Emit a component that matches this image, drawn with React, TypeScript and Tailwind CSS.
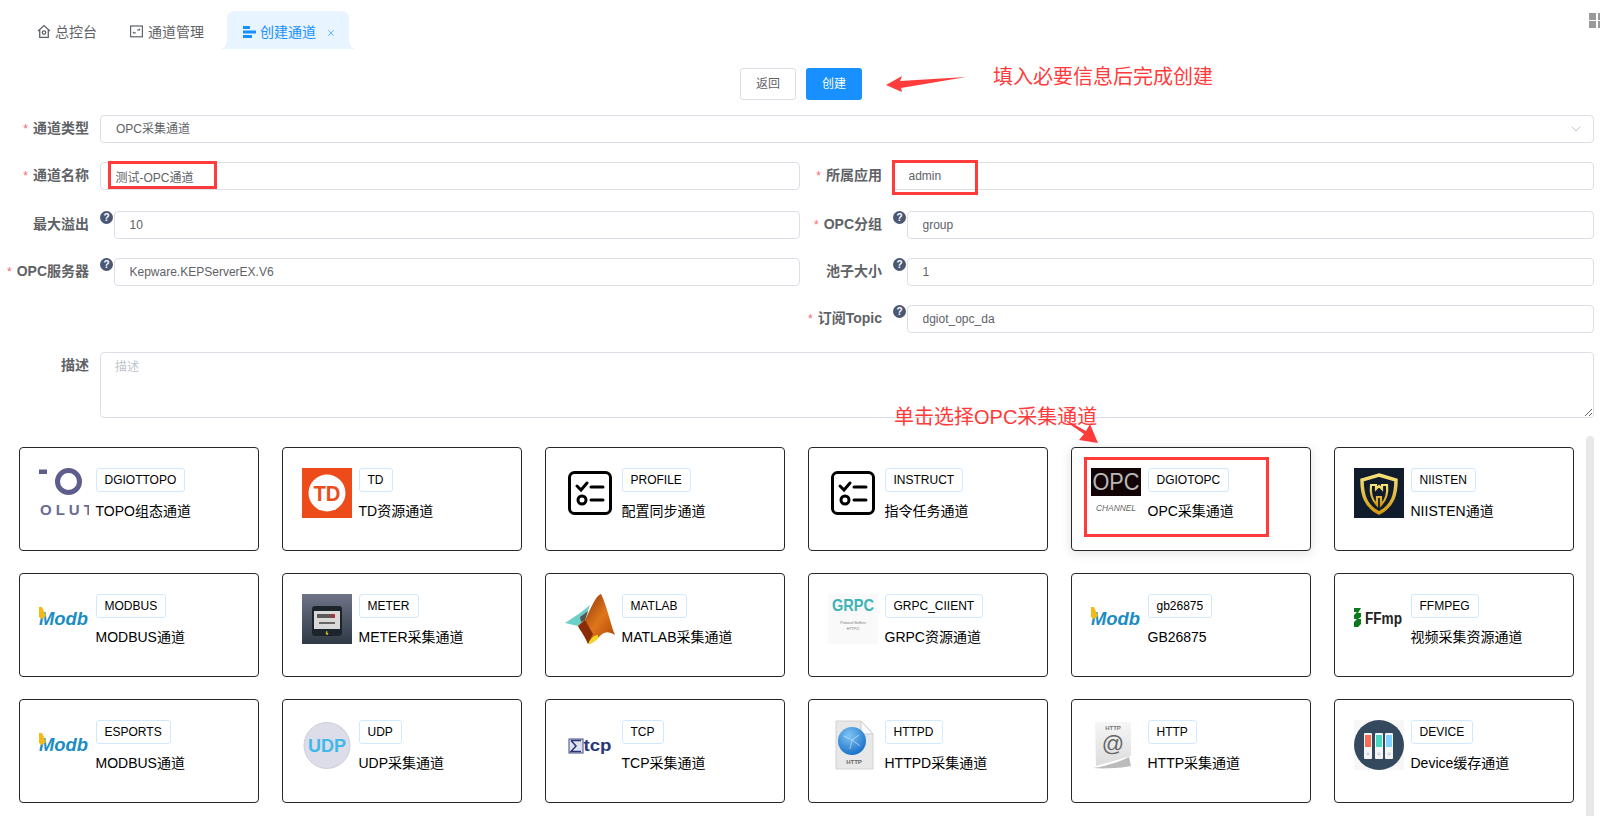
import { ChevronDown, X } from 'lucide-react'
import type { ReactNode } from 'react'

const Checklist = () => (
  <svg width="50" height="50" viewBox="0 0 50 50" fill="none" stroke="#000" strokeLinecap="round">
    <rect x="4.5" y="4.5" width="41" height="41" rx="5" strokeWidth="3" />
    <path d="M12 18l4 4 6-7" strokeWidth="3" />
    <line x1="26" y1="19" x2="38" y2="19" strokeWidth="3" />
    <circle cx="17" cy="32" r="4" strokeWidth="3" />
    <line x1="26" y1="32" x2="38" y2="32" strokeWidth="3" />
  </svg>
)

const Modbus = () => (
  <svg width="50" height="50" viewBox="0 0 50 50">
    <text x="0" y="31" fontSize="19" fontWeight="700" fontStyle="italic" fontFamily="Liberation Sans" fill="#1b8cc4" textLength="49" lengthAdjust="spacingAndGlyphs">Modb</text>
    <path d="M0 13l3 0 4 9-4 3-3-2z" fill="#f5b915" />
  </svg>
)

const logos: Record<string, ReactNode> = {
  topo: (
    <svg width="50" height="50" viewBox="0 0 50 50">
      <rect x="0" y="1.5" width="8" height="4.5" fill="#5d5d8e" />
      <circle cx="29.5" cy="13.5" r="11" fill="none" stroke="#5d5d8e" strokeWidth="5" />
      <text x="1" y="47" fontSize="15" fontWeight="700" letterSpacing="4" fontFamily="Liberation Sans" fill="#6b6b96">OLUT</text>
    </svg>
  ),
  td: (
    <svg width="50" height="50" viewBox="0 0 50 50">
      <rect width="50" height="50" fill="#ee4b1a" />
      <circle cx="25" cy="25" r="18.5" fill="#fff" />
      <text x="25" y="33" textAnchor="middle" fontSize="22" fontWeight="700" fontFamily="Liberation Sans" fill="#ee4b1a" textLength="27" lengthAdjust="spacingAndGlyphs">TD</text>
    </svg>
  ),
  check: <Checklist />,
  opc: (
    <svg width="50" height="50" viewBox="0 0 50 50">
      <rect width="50" height="28" fill="#120406" />
      <text x="25" y="22" textAnchor="middle" fontSize="23" fontFamily="Liberation Sans" fill="#b9b6b4" textLength="47" lengthAdjust="spacingAndGlyphs">OPC</text>
      <text x="25" y="43" textAnchor="middle" fontSize="9" fontStyle="italic" fontFamily="Liberation Sans" fill="#666" textLength="40" lengthAdjust="spacingAndGlyphs">CHANNEL</text>
    </svg>
  ),
  niisten: (
    <svg width="50" height="50" viewBox="0 0 50 50">
      <defs>
        <linearGradient id="shield" x1="0" y1="0" x2="0" y2="1">
          <stop offset="0" stopColor="#f3e27a" />
          <stop offset="1" stopColor="#d19a12" />
        </linearGradient>
      </defs>
      <rect width="50" height="50" fill="#101b2b" />
      <path d="M25 7l17 5c0 14-3 26-17 33C11 38 8 26 8 12z" fill="none" stroke="url(#shield)" strokeWidth="3.5" />
      <path d="M17 17h5v4l3-3 3 3v-4h5c1 8 0 14-6 20v-8h-4v8c-6-6-7-12-6-20z" fill="none" stroke="url(#shield)" strokeWidth="2.2" />
    </svg>
  ),
  modbus: <Modbus />,
  meter: (
    <svg width="50" height="50" viewBox="0 0 50 50">
      <defs>
        <linearGradient id="meterBg" x1="0" y1="0" x2="0" y2="1">
          <stop offset="0" stopColor="#6f7388" />
          <stop offset="1" stopColor="#2e3a45" />
        </linearGradient>
      </defs>
      <rect width="50" height="50" fill="url(#meterBg)" />
      <rect x="10" y="12" width="30" height="30" rx="3" fill="#1d252c" />
      <rect x="12" y="17" width="26" height="18" fill="#d9dad7" />
      <rect x="15" y="20" width="18" height="4" fill="#5a5a5a" />
      <rect x="29" y="20" width="4" height="4" fill="#a33" />
      <rect x="17" y="28" width="16" height="2" fill="#666" />
      <path d="M25 37l-1 3 2-1-1 2" stroke="#e2c02c" fill="none" />
    </svg>
  ),
  matlab: (
    <svg width="50" height="50" viewBox="0 0 50 50">
      <defs>
        <linearGradient id="peak" x1="0" y1="0" x2="1" y2="1">
          <stop offset="0" stopColor="#7d2a0a" />
          <stop offset="0.55" stopColor="#e0761a" />
          <stop offset="1" stopColor="#a83f06" />
        </linearGradient>
      </defs>
      <path d="M0 29l15-10 10-8-5 15-7 6z" fill="#6fcfc7" />
      <path d="M15 23l8-6-3 9-4 2z" fill="#555" />
      <path d="M36 0c6 12 10 32 14 41-8-5-12-3-17 3-4 4-8 6-10 6-3-8-8-14-10-18l7-6C26 14 31 1 36 0z" fill="url(#peak)" />
      <path d="M13 32l7-6 8 14-5 10c-3-8-8-14-10-18z" fill="#8a2c08" />
      <path d="M23 50c2-5 6-9 10-9l0 3c-4 4-8 6-10 6z" fill="#f6d71c" />
    </svg>
  ),
  grpc: (
    <svg width="50" height="50" viewBox="0 0 50 50">
      <rect width="50" height="50" fill="#f9f9f9" />
      <text x="25" y="17" textAnchor="middle" fontSize="17" fontWeight="700" fontFamily="Liberation Sans" fill="#3fb3b7" textLength="42" lengthAdjust="spacingAndGlyphs">GRPC</text>
      <text x="25" y="30" textAnchor="middle" fontSize="3.6" fontFamily="Liberation Sans" fill="#777">Protocol Buffers</text>
      <text x="25" y="36" textAnchor="middle" fontSize="3.6" fontFamily="Liberation Sans" fill="#777">HTTP/2</text>
    </svg>
  ),
  ffmpeg: (
    <svg width="50" height="50" viewBox="0 0 50 50">
      <path d="M0 14h7l-3 5 3 0v4l-3 2 3 0v5l-3 3h3v0H0l0-5 3-3-3 0v-4l3-3-3 0z" fill="#0c7a1c" />
      <text x="11" y="30" fontSize="16" fontWeight="700" fontFamily="Liberation Sans" fill="#222" textLength="37" lengthAdjust="spacingAndGlyphs">FFmp</text>
    </svg>
  ),
  udp: (
    <svg width="50" height="50" viewBox="0 0 50 50">
      <circle cx="25" cy="25.5" r="23" fill="#dddde9" stroke="#cfcfd6" />
      <text x="25" y="32" textAnchor="middle" fontSize="19" fontWeight="700" fontFamily="Liberation Sans" fill="#3fb8ea" textLength="38" lengthAdjust="spacingAndGlyphs">UDP</text>
    </svg>
  ),
  tcp: (
    <svg width="50" height="50" viewBox="0 0 50 50">
      <rect x="4" y="19" width="14" height="14" fill="#dfe2ee" stroke="#3f4a86" strokeWidth="1" />
      <path d="M6 20.5h10M6 20.5l5 5.5-5 5.5h10" fill="none" stroke="#2b3678" strokeWidth="1.5" />
      <text x="18.5" y="31" fontSize="17" fontWeight="700" fontFamily="Liberation Sans" fill="#2b3678" textLength="28" lengthAdjust="spacingAndGlyphs">tcp</text>
    </svg>
  ),
  httpd: (
    <svg width="50" height="50" viewBox="0 0 50 50">
      <defs>
        <radialGradient id="globe" cx="0.4" cy="0.3" r="0.8">
          <stop offset="0" stopColor="#7fc4f5" />
          <stop offset="1" stopColor="#0d66c2" />
        </radialGradient>
      </defs>
      <path d="M8 1h25l12 13v35H8z" fill="#e8e8e8" stroke="#d2d2d2" />
      <path d="M33 1l12 13H33z" fill="#fafafa" stroke="#ccc" />
      <circle cx="24" cy="21" r="14" fill="url(#globe)" />
      <path d="M16 16l8 4 7-5M24 20l-2 9M24 20l8 6" stroke="#cfe8fb" strokeWidth="0.7" fill="none" />
      <text x="26" y="44" textAnchor="middle" fontSize="6" fontWeight="700" fontFamily="Liberation Sans" fill="#666">HTTP</text>
    </svg>
  ),
  http: (
    <svg width="50" height="50" viewBox="0 0 50 50">
      <defs>
        <linearGradient id="page" x1="0" y1="0" x2="0" y2="1">
          <stop offset="0" stopColor="#f6f6f6" />
          <stop offset="1" stopColor="#dcdcdc" />
        </linearGradient>
      </defs>
      <path d="M4 2h36v34l-35 10z" fill="url(#page)" />
      <path d="M2 48c14-2 26-6 36-11l2 9c-10 2-26 3-38 2z" fill="#bbb" />
      <text x="22" y="10" textAnchor="middle" fontSize="6" fontWeight="700" fontFamily="Liberation Sans" fill="#777">HTTP</text>
      <text x="22" y="31" textAnchor="middle" fontSize="22" fontFamily="Liberation Sans" fill="#666">@</text>
    </svg>
  ),
  device: (
    <svg width="50" height="50" viewBox="0 0 50 50">
      <rect width="50" height="50" fill="#f7f7f7" />
      <circle cx="25" cy="25" r="25" fill="#34495e" />
      <rect x="10" y="13" width="8" height="26" rx="1" fill="#f5f5f5" />
      <rect x="21" y="13" width="8" height="26" rx="1" fill="#f5f5f5" />
      <rect x="31" y="13" width="8" height="26" rx="1" fill="#f5f5f5" />
      <rect x="11" y="15" width="6" height="12" fill="#fb6c54" />
      <rect x="22" y="15" width="6" height="12" fill="#48d8bd" />
      <rect x="32" y="15" width="6" height="12" fill="#82d2ff" />
      <circle cx="14" cy="34" r="1.7" fill="#d5d8e3" />
      <circle cx="25" cy="34" r="1.7" fill="#d5d8e3" />
      <circle cx="35" cy="34" r="1.7" fill="#d5d8e3" />
    </svg>
  ),
}

const channels = [
  { logo: 'topo', tag: 'DGIOTTOPO', name: 'TOPO组态通道' },
  { logo: 'td', tag: 'TD', name: 'TD资源通道' },
  { logo: 'check', tag: 'PROFILE', name: '配置同步通道' },
  { logo: 'check', tag: 'INSTRUCT', name: '指令任务通道' },
  { logo: 'opc', tag: 'DGIOTOPC', name: 'OPC采集通道', active: true },
  { logo: 'niisten', tag: 'NIISTEN', name: 'NIISTEN通道' },
  { logo: 'modbus', tag: 'MODBUS', name: 'MODBUS通道' },
  { logo: 'meter', tag: 'METER', name: 'METER采集通道' },
  { logo: 'matlab', tag: 'MATLAB', name: 'MATLAB采集通道' },
  { logo: 'grpc', tag: 'GRPC_CIIENT', name: 'GRPC资源通道' },
  { logo: 'modbus', tag: 'gb26875', name: 'GB26875' },
  { logo: 'ffmpeg', tag: 'FFMPEG', name: '视频采集资源通道' },
  { logo: 'modbus', tag: 'ESPORTS', name: 'MODBUS通道' },
  { logo: 'udp', tag: 'UDP', name: 'UDP采集通道' },
  { logo: 'tcp', tag: 'TCP', name: 'TCP采集通道' },
  { logo: 'httpd', tag: 'HTTPD', name: 'HTTPD采集通道' },
  { logo: 'http', tag: 'HTTP', name: 'HTTP采集通道' },
  { logo: 'device', tag: 'DEVICE', name: 'Device缓存通道' },
]

function Help() {
  return (
    <span className="w-[13px] h-[13px] mr-px rounded-full bg-[#4a5775] text-white text-[10px] leading-[13px] font-bold text-center shrink-0">?</span>
  )
}

function Label({ text, required, width }: { text: string; required?: boolean; width: string }) {
  return (
    <label className={`${width} shrink-0 mr-[11px] text-right text-sm font-bold leading-[27px] text-[#606266] whitespace-nowrap`}>
      {required && <span className="text-[#f56c6c] font-normal mr-[5px] text-xs">*</span>}
      {text}
    </label>
  )
}

function Field({ label, value, required, help, right }: { label: string; value: string; required?: boolean; help?: boolean; right?: boolean }) {
  return (
    <div className="flex h-7">
      <Label text={label} required={required} width={right ? 'w-[82px]' : 'w-[89px]'} />
      {help && <Help />}
      <input
        readOnly
        value={value}
        className="flex-1 min-w-0 h-7 border border-[#dcdfe6] rounded px-[14.5px] text-xs text-[#606266] outline-none"
      />
    </div>
  )
}

function Card({ logo, tag, name, active }: { logo: string; tag: string; name: string; active?: boolean }) {
  return (
    <div className={`h-[104px] border-[1.5px] border-[#24292e] rounded-sm pt-5 pl-[19px] flex gap-[7px] ${active ? 'shadow-[0_2px_12px_rgba(0,0,0,0.12)]' : ''}`}>
      <div className="w-[50px] h-[50px] shrink-0 overflow-hidden">{logos[logo]}</div>
      <div className="-mt-px">
        <span className="inline-block h-6 px-2 border border-[#d1e9ff] rounded-[3px] text-xs leading-[22px] text-black">{tag}</span>
        <p className="mt-[9px] text-sm leading-5 text-black whitespace-nowrap">{name}</p>
      </div>
    </div>
  )
}

function TabShape() {
  return (
    <svg className="absolute inset-0" width="134" height="38" viewBox="0 0 134 38">
      <path d="M0 38c3-1 5-3 6-8V8c0-5 3-8 8-8h106c5 0 8 3 8 8v22c1 5 3 7 6 8z" fill="#e8f4ff" />
    </svg>
  )
}

export default function App() {
  return (
    <div className="relative w-[1600px] h-[816px] overflow-hidden bg-white [font-family:'Liberation_Sans','Noto_Sans_CJK_SC',sans-serif]">
      {/* tabs */}
      <div className="flex h-[49px] pt-[11px] pl-[37px] items-start text-sm text-[#606266]">
        <div className="flex items-center gap-1 h-[38px] pt-[3px] w-[93px]">
          <svg width="14" height="15" viewBox="0 0 13 14" fill="none" stroke="#5f6368" strokeWidth="1.2">
            <path d="M1 6.5L6.5 1.5 12 6.5M2.5 5.5V12.5H10.5V5.5" />
            <circle cx="6.5" cy="8" r="1.6" />
          </svg>
          总控台
        </div>
        <div className="flex items-center gap-[5px] h-[38px] pt-[3px] w-[91px]">
          <svg width="13" height="13" viewBox="0 0 13 13" fill="none" stroke="#5f6368" strokeWidth="1.2">
            <rect x="0.6" y="1" width="11.8" height="10.8" />
            <path d="M3 8h3M3 8l1.2-1.2M10 5H7M10 5L8.8 3.8" />
          </svg>
          通道管理
        </div>
        <div className="relative w-[134px] h-[38px] text-[#1890ff]">
          <TabShape />
          <div className="relative flex items-center h-full pt-[3px] pl-[22px]">
            <svg width="13" height="12" viewBox="0 0 13 12" fill="#1890ff" className="mr-1">
              <rect width="7" height="3" />
              <rect y="4.5" width="13" height="3" />
              <rect y="9" width="9" height="3" />
            </svg>
            创建通道
            <X size={10} strokeWidth={1.5} className="ml-[10px] mt-[3px]" />
          </div>
        </div>
      </div>

      {/* top right grid button */}
      <div className="absolute left-[1589px] top-[13px] grid grid-cols-[7px_7px] gap-x-[2px] gap-y-px">
        <span className="h-[7px] bg-[#999]" />
        <span className="h-[7px] bg-[#999]" />
        <span className="h-[7px] bg-[#999]" />
        <span className="h-[7px] bg-[#999]" />
      </div>

      {/* toolbar */}
      <div className="flex gap-[10px] pl-[740px] mt-[19px] h-8">
        <button className="w-[56px] border border-[#dcdfe6] rounded-[3px] text-xs text-[#606266]">返回</button>
        <button className="w-[56px] bg-[#1890ff] rounded-[3px] text-xs text-white">创建</button>
      </div>

      {/* form */}
      <div className="mt-[15px] w-[1594px]">
        <div className="flex h-7">
          <Label text="通道类型" required width="w-[89px]" />
          <div className="flex-1 flex items-center justify-between border border-[#dcdfe6] rounded pl-[15px] pr-[9px] text-xs text-[#606266]">
            OPC采集通道
            <ChevronDown size={16} strokeWidth={1.5} className="text-[#c0c4cc]" />
          </div>
        </div>
        <div className="grid grid-cols-[800px_794px] mt-[19px]">
          <Field label="通道名称" value="测试-OPC通道" required />
          <Field label="所属应用" value="admin" required right />
        </div>
        <div className="grid grid-cols-[800px_794px] mt-[21px]">
          <Field label="最大溢出" value="10" help />
          <Field label="OPC分组" value="group" required help right />
        </div>
        <div className="grid grid-cols-[800px_794px] mt-[19px]">
          <Field label="OPC服务器" value="Kepware.KEPServerEX.V6" required help />
          <Field label="池子大小" value="1" help right />
        </div>
        <div className="grid grid-cols-[800px_794px] mt-[19px]">
          <div />
          <Field label="订阅Topic" value="dgiot_opc_da" required help right />
        </div>
        <div className="flex mt-[19px]">
          <Label text="描述" width="w-[89px]" />
          <textarea
            readOnly
            placeholder="描述"
            className="flex-1 h-[66px] border border-[#dcdfe6] rounded px-[14px] py-[4px] text-xs leading-5 text-[#606266] placeholder:text-[#c0c4cc] outline-none"
          />
        </div>
      </div>

      {/* channel cards */}
      <div className="grid grid-cols-[repeat(6,240px)] gap-x-[23px] gap-y-[22px] pl-[18.5px] mt-[29px]">
        {channels.map((c) => (
          <Card key={c.tag} {...c} />
        ))}
      </div>

      {/* scrollbar */}
      <div className="absolute left-[1586px] top-[436px] bottom-0 w-2 rounded-t bg-[#e8e8e8]" />

      {/* red annotations */}
      <div className="absolute left-[993px] top-[65px] text-xl leading-6 text-[#ff3b3b] whitespace-nowrap">填入必要信息后完成创建</div>
      <svg className="absolute left-[880px] top-[70px]" width="90" height="28" viewBox="880 70 90 28">
        <polygon points="886,85 902,76 900,81 966,77 901,88 902,92" fill="#ff3b3b" />
      </svg>
      <div className="absolute left-[108px] top-[161px] w-[109px] h-7 border-[3px] border-[#ff3b3b]" />
      <div className="absolute left-[892px] top-[160px] w-[86px] h-[35px] border-[3px] border-[#ff3b3b]" />
      <div className="absolute left-[894px] top-[405px] text-xl leading-6 text-[#ff3b3b] whitespace-nowrap">单击选择OPC采集通道</div>
      <svg className="absolute left-[1060px] top-[415px]" width="45" height="32" viewBox="1060 415 45 32">
        <polygon points="1066,420 1086,431 1090,424 1098,443 1079,440 1084,434 1068,423" fill="#ff3b3b" />
      </svg>
      <div className="absolute left-[1084px] top-[457px] w-[185px] h-[80px] border-[3px] border-[#ff3b3b]" />
    </div>
  )
}
